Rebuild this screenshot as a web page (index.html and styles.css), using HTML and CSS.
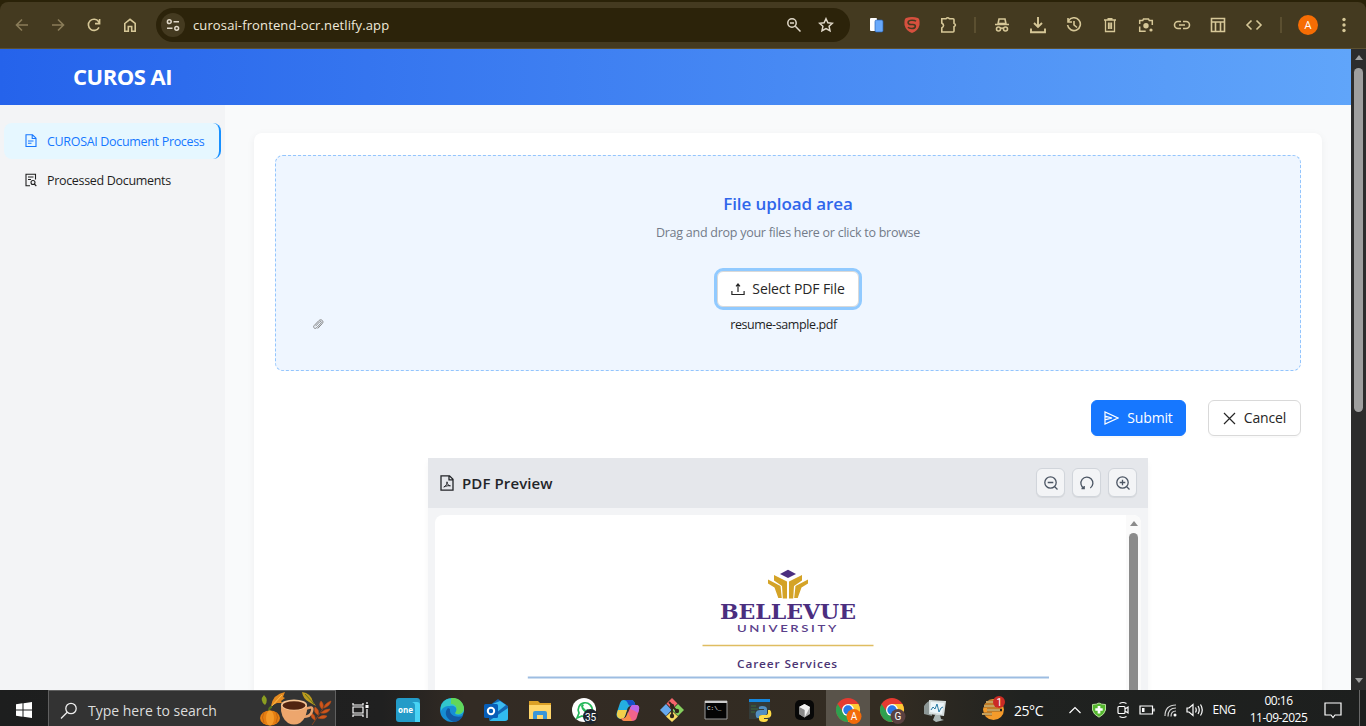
FILE: index.html
```html
<!DOCTYPE html>
<html lang="en">
<head>
<meta charset="utf-8">
<title>CUROS AI</title>
<link rel="stylesheet" href="styles.css">
</head>
<body>
<div class="screen">
  <div class="tabstrip"></div>
  <div class="toolbar">
    <span class="slot dim"><svg width="16" height="16" viewBox="0 0 16 16"><path d="M14 8H3M8 2.5 2.5 8 8 13.5"/></svg></span>
    <span class="slot dim"><svg width="16" height="16" viewBox="0 0 16 16"><path d="M2 8h11M8 2.5 13.500 8 8 13.500"/></svg></span>
    <span class="slot"><svg width="16" height="16" viewBox="0 0 16 16"><path d="M13 10.300A5.600 5.600 0 1 1 12.600 4.600L13.300 6M13.600 2v4.600H9"/></svg></span>
    <span class="slot"><svg width="16" height="16" viewBox="0 0 16 16"><path d="M2.800 6.500 8 2.300l5.200 4.200v7.700H9.700V9.500H6.300v4.700H2.800z"/></svg></span>
    <div class="address">
      <span class="site"><svg width="14" height="14" viewBox="0 0 14 14"><circle cx="3.300" cy="3.700" r="1.900"/><path d="M7.500 3.700H13M1 10.300h5.500"/><circle cx="10.700" cy="10.300" r="1.900"/></svg></span>
      <span class="url">curosai-frontend-ocr.netlify.app</span>
      <span class="tool"><svg width="16" height="16" viewBox="0 0 16 16"><circle cx="6" cy="6" r="4.200"/><path d="M4 6h4M9.300 9.300 14.500 14.500"/></svg></span>
      <span class="tool"><svg width="16" height="16" viewBox="0 0 16 16"><path d="m8 1.700 1.900 4.100 4.500.5-3.300 3 .9 4.400L8 11.500l-4 2.200.9-4.400-3.300-3 4.500-.5z"/></svg></span>
    </div>
    <span class="slot"><svg width="16" height="16" viewBox="0 0 16 16"><rect x="2" y="1" width="7" height="13" rx="1" fill="#fff" stroke="none"/><rect x="7" y="3" width="8" height="12" rx="1.500" fill="#68a9fb" stroke="#2861b5" stroke-width=".7"/></svg></span>
    <span class="slot"><svg width="18" height="18" viewBox="0 0 18 18"><path d="M3 2Q9 0 15 2Q17 3 16.500 9Q15 15 9 17Q3 15 1.500 9Q1 3 3 2z" fill="#d7503e" stroke="none"/><path d="M13 5.300Q12 4.300 9 4.300C4 4.300 4 8.500 8 8.500h2c3.500 0 3 4-1 4q-3 0-4-1.200" stroke="#443a20" stroke-width="1.600"/></svg></span>
    <span class="slot"><svg width="18" height="18" viewBox="0 0 18 18"><path d="M2.800 2.800H7Q8.700.8 10.400 2.800H14a1 1 0 0 1 1 1v3.600q2.800 1.600 0 3.200V15a1 1 0 0 1-1 1H2.800V12q3.500-2.500 0-5z"/></svg></span>
    <span class="divider"></span>
    <span class="slot"><svg width="16" height="16" viewBox="0 0 16 16"><path d="M4 7 5 2h6l1 5M1 7.500h14"/><path d="M4 6.500h8"/><circle cx="4.500" cy="12" r="2"/><circle cx="11.500" cy="12" r="2"/><path d="M6.500 11.500q1.500-1 3 0"/></svg></span>
    <span class="slot"><svg width="18" height="18" viewBox="0 0 18 18"><path d="M9 1v9.500M5 7l4 4 4-4M2 12.500v3.700h14v-3.700" stroke-width="1.900"/></svg></span>
    <span class="slot"><svg width="16" height="16" viewBox="0 0 16 16"><path d="M2.500 3.800A6.400 6.400 0 1 1 1.600 8M2 1v4h4M8 4v4l3 2.500"/></svg></span>
    <span class="slot"><svg width="16" height="16" viewBox="0 0 16 16"><path d="M2 3h12M5.500 1.700h5M3.500 3.500v11h9v-11M6.500 5.500v6.500M8 5.500v6.500M9.500 5.500v6.500" stroke-width="1.300"/></svg></span>
    <span class="slot"><svg width="16" height="16" viewBox="0 0 16 16"><path d="M1.700 7V3.600h3l.8-1.700h5l.8 1.700h3V8M1.700 9.500v4.800h6" stroke-width="1.500"/><circle cx="8" cy="8.700" r="2.700" fill="#d6c797" stroke="none"/><circle cx="13" cy="13" r="1.600" fill="#d6c797" stroke="none"/></svg></span>
    <span class="slot"><svg width="18" height="16" viewBox="0 0 18 16"><path d="M8 4.500H5a3.500 3.500 0 0 0 0 7h3M10 4.500h3a3.500 3.500 0 0 1 0 7h-3M6 8h6"/></svg></span>
    <span class="slot"><svg width="16" height="16" viewBox="0 0 16 16"><path d="M1.500 1.500h13v13h-13zM1 5h14M5.500 5v9M10.500 5v9"/></svg></span>
    <span class="slot"><svg width="18" height="16" viewBox="0 0 18 16"><path d="M6.500 3.500 2 8l4.500 4.500M11.500 3.500 16 8l-4.500 4.500"/></svg></span>
    <span class="divider"></span>
    <span class="slot"><span class="avatar">A</span></span>
    <span class="slot"><svg width="16" height="16" viewBox="0 0 16 16"><g fill="#d6c797" stroke="none"><circle cx="8" cy="2.500" r="1.700"/><circle cx="8" cy="8" r="1.700"/><circle cx="8" cy="13.500" r="1.700"/></g></svg></span>
  </div>

  <div class="viewport">
    <div class="page">
      <header class="header"><h1 class="brand">CUROS AI</h1></header>
      <div class="content">
        <nav class="sidebar">
          <a class="nav-item active"><svg width="14" height="14" viewBox="0 0 14 14"><path d="M2 .8h6.500L12 4.200v8.300H2zM8.200 1v3.500H12M4 7h5.500M4 9.300h3.500"/></svg><span>CUROSAI Document Process</span></a>
          <a class="nav-item"><svg width="14" height="14" viewBox="0 0 14 14"><path d="M6 12.700H2V1.300h9.500v5.200M4 4h5.500M4 6.500h3"/><circle cx="9" cy="9.500" r="2"/><path d="m10.300 11 2 2"/></svg><span>Processed Documents</span></a>
        </nav>
        <main class="main">
          <section class="card">
            <div class="dropzone">
              <h2 class="drop-title">File upload area</h2>
              <p class="drop-hint">Drag and drop your files here or click to browse</p>
              <button class="button select"><svg width="14" height="14" viewBox="0 0 14 14"><path d="M7 10V2M5 4.300 7 2l2 2.300M.9 9v3.500h12.200V9"/></svg><span>Select PDF File</span></button>
              <div class="file">
                <svg width="12" height="13" viewBox="0 0 12 13"><path d="m3.500 8.200 4.200-4.400c1-1 2.300.2 1.300 1.300L4.700 9.700c-1.800 1.800-4.200-.4-2.500-2.200l4.500-4.700c2.500-2.500 5.700.4 3.500 2.800L5.700 10.500"/></svg>
                <span class="file-name">resume-sample.pdf</span>
              </div>
            </div>
            <div class="actions">
              <button class="button submit"><svg width="15" height="14" viewBox="0 0 15 14"><path d="M1 1v4.200L8 7 1 8.800V13l13-6zM1 5.200V8.800"/></svg><span>Submit</span></button>
              <button class="button cancel"><svg width="13" height="13" viewBox="0 0 13 13"><path d="m1 1 11 11M12 1 1 12"/></svg><span>Cancel</span></button>
            </div>
            <section class="preview">
              <div class="preview-head">
                <svg width="14" height="16" viewBox="0 0 14 16"><path d="M1 .8h8.500L13 4.300v10.900H1zM9 1v3.800h4"/><path d="M3.800 12c2.400-1.200 3.500-3.500 3.200-5.200 0 2.500 1.600 4 3.400 4-2-.3-4.200 0-6.600 1.200" stroke-width="1"/></svg>
                <span class="preview-title">PDF Preview</span>
                <span class="zoom-button"><svg width="16" height="16" viewBox="0 0 16 16"><circle cx="7.500" cy="7.500" r="5.700"/><path d="M4.700 7.500h5.600M11.700 11.700l2.800 2.800"/></svg></span>
                <span class="zoom-button"><svg width="16" height="16" viewBox="0 0 16 16"><path d="M5 13.300A6 6 0 1 1 11.300 13M2.500 13.500H5.200V11"/></svg></span>
                <span class="zoom-button"><svg width="16" height="16" viewBox="0 0 16 16"><circle cx="7.500" cy="7.500" r="5.700"/><path d="M4.700 7.500h5.600M7.500 4.700v5.600M11.700 11.700l2.800 2.800"/></svg></span>
              </div>
              <div class="preview-body">
                <div class="paper">
                  <svg class="letterhead" width="522" height="118" viewBox="0 0 522 118">
                    <path d="M261 -.2 253 4l8 4 8-4z" fill="#4b2e7f"/>
                    <g fill="#d4a327">
                      <path d="M247 5 260 11.500V28.500H255.800L255 16 247 10.500zM275 5 262 11.500V28.500H266.200L267 16 275 10.500z"/>
                      <path d="M241 9.500 253.500 16 254.800 28H251.300L247.500 17.500 241 13.500zM281 9.500 268.500 16 267.200 28H270.700L274.500 17.500 281 13.500z"/>
                    </g>
                    <text x="193" y="49" textLength="136" lengthAdjust="spacingAndGlyphs" class="school">BELLEVUE</text>
                    <text x="210" y="62" textLength="102" lengthAdjust="spacingAndGlyphs" class="university">UNIVERSITY</text>
                    <path d="M175.500 75.500h171" stroke="#dfbd61" stroke-width="1.400"/>
                    <text x="210" y="98" textLength="101" lengthAdjust="spacingAndGlyphs" class="career">Career Services</text>
                    <path d="M.8 107.500H522" stroke="#9dbde2" stroke-width="2"/>
                  </svg>
                </div>
                <div class="paper-scroll"><span class="arrow-up"></span><span class="paper-thumb"></span></div>
              </div>
            </section>
          </section>
        </main>
      </div>
    </div>
    <div class="scrollbar"><span class="arrow-up"></span><span class="thumb"></span><span class="arrow-down"></span></div>
  </div>

  <footer class="taskbar">
    <span class="start"><svg width="16" height="16" viewBox="0 0 16 16" fill="#fff"><path d="M0 2.200 6.500 1.300v6.200H0zM7.500 1.200 16 0v7.500H7.500zM0 8.500h6.500v6.200L0 13.800zM7.500 8.500H16V16l-8.500-1.200z"/></svg></span>
    <div class="search">
      <svg width="18" height="18" viewBox="0 0 18 18" fill="none" stroke="#eee" stroke-width="1.300"><circle cx="11" cy="6.500" r="5.200"/><path d="M7.200 10.300 1 16.500"/></svg>
      <span>Type here to search</span>
      <svg class="autumn" width="74" height="35" viewBox="0 0 74 35">
        <path d="M6 14Q0 9 5 4q5 5 1 10v3" fill="#8b9e21"/>
        <path d="M12 15q2-12 14-14l-2 5 2 1-4 3 1 2-5 0z" fill="#e58a20"/><path d="m11 17 12-13" stroke="#ffc04c"/>
        <path d="M43 1q9 1 11 10l3 4-7-4q-6-3-7-10z" fill="#bd9b1e"/>
        <path d="m46 3 9 10" stroke="#62721c"/>
        <path d="M10 20q0-4 3-4" stroke="#57731a" stroke-width="2" fill="none"/>
        <ellipse cx="11" cy="27" rx="10" ry="7.500" fill="#e47e12"/><ellipse cx="11" cy="27" rx="4" ry="7.500" fill="#f59a28"/><path d="M5 21q-3 5 0 11M17 21q3 5 0 11" stroke="#bd5e0d" stroke-width=".8" fill="none"/>
        <path d="M53 34 67 13M56 29q-5-2-4-7 5 2 4 7M59 24q-5-3-3-8 5 3 3 8M63 18q-4-4-1-8 4 4 1 8M59 27q7 2 9-2-5-2-9 2M62 22q7 1 9-4-6 0-9 4M65 17q6-2 7-7-6 2-7 7" stroke="#bb4b16" stroke-width=".6" fill="#cf571c"/>
        <path d="M46 18q9-4 7 2-1 6-10 6" fill="none" stroke="#e8a16b" stroke-width="2.500"/>
        <path d="M22 14h26q1 12-7 18-6 3-12 0-8-6-7-18z" fill="#eda66d"/><ellipse cx="35" cy="14" rx="13" ry="5.500" fill="#f6c595"/><ellipse cx="35" cy="14.500" rx="11.500" ry="4.200" fill="#512310"/>
      </svg>
    </div>
    <span class="task-view"><svg width="17" height="16" viewBox="0 0 17 16" fill="none" stroke="#fff" stroke-width="1.200"><path d="M1 1v2h10V1M1 15v-2h10v2M1 5h10v6H1zM15 0v2M15 7v9"/><path d="M13.500 4.500h3" stroke-width="3"/></svg></span>
    <div class="apps">
      <span class="app"><svg width="24" height="24" viewBox="0 0 24 24"><rect width="24" height="24" rx="3" fill="#239bc8"/><path d="M16 4h5q3 0 3 3v17h-5V7q0-2-3-3z" fill="#48d3f5"/><text x="2" y="14.500" textLength="15" lengthAdjust="spacingAndGlyphs" class="one">one</text></svg></span>
      <span class="app"><svg width="24" height="24" viewBox="0 0 24 24"><circle cx="12" cy="12" r="12" fill="#168ed5"/><path d="M1 8C4-2 20-3 24 10c1 6-5 8-9 6 4-5 0-9-5-8-5 0-8 2-9 5z" fill="#32c6cc"/><path d="M11 0c8-1 13 5 13 11-1 5-6 6-9 4 4-5 0-9-4-9z" fill="#61d75b"/><path d="M8 10c-5 5-1 12 6 14 4 0 7-3 9-6-6 2-14 0-13-7z" fill="#125aa5"/></svg></span>
      <span class="app"><svg width="24" height="24" viewBox="0 0 24 24"><path d="m5 8 9-7 10 7v14H5z" fill="#1267b4"/><path d="M6 7 16 3l6 4-10 8z" fill="#3cbbf0"/><path d="M5 23 24 10v10q0 3-3 3z" fill="#31bbef"/><rect y="6" width="14" height="14" rx="1.500" fill="#075eb8"/><circle cx="7" cy="13" r="3.200" fill="none" stroke="#fff" stroke-width="2"/></svg></span>
      <span class="app"><svg width="24" height="24" viewBox="0 0 24 24"><path d="M1 3h9l2 2h11v16H1z" fill="#dba027"/><path d="M1 7h22v14H1z" fill="#ffd66b"/><path d="M5 21v-6q0-2 2-2h10q2 0 2 2v6h-4v-4H9v4z" fill="#3a96d8"/></svg></span>
      <span class="app wide"><svg width="26" height="26" viewBox="0 0 26 26"><circle cx="12" cy="12" r="12" fill="#fff"/><path d="m5 20 2-5a7 7 0 1 1 3 3z" fill="none" stroke="#26b85b" stroke-width="1.700"/><path d="M9 8q1 6 7 7l1-3-2-1-1 1-3-3 1-2-2-1z" fill="#26b85b"/><circle cx="18.500" cy="18.500" r="7.500" fill="#1d242d"/><text x="18.500" y="22.500" class="count">35</text></svg></span>
      <span class="app"><svg width="24" height="24" viewBox="0 0 24 24"><path d="M7 2h8q3 0 4 4l.5 2H15q-3 0-4 4l-2 6q-1 3-4 3-6-1-4-7L4 5q1-3 3-3z" fill="#24aee0"/><path d="M2 12 1 15q-1 5 4 6 3 0 4-3l2-6z" fill="#f2cf4a"/><path d="M7 2h8q3 0 4 4l.5 2H15q-2 0-3-2-1-4-5-4z" fill="#1750c9"/><path d="M17 7h3q4 0 3 5l-2 7q-1 4-5 4H9q-3 0-4-3 4 2 6-3l3-7q1-3 3-3z" fill="#f0638b"/><path d="M17 7h3q4 0 3 5l-1 3q-4-3-8-4 1-4 3-4z" fill="#bd66e8"/><path d="M9 23q-3 0-4-3 4 2 6-3l1-3 4 9z" fill="#f78b4b"/></svg></span>
      <span class="app"><svg width="24" height="24" viewBox="0 0 24 24"><path d="m12 0 5.500 5.500L12 11 6.500 5.500z" fill="#f4656b"/><path d="m6 6 5.500 6L6 18l-6-6z" fill="#66a9ee"/><path d="m18 6 6 6-6 6-6-6z" fill="#86cf5e"/><path d="m12 13 6 5.500-6 5.500-6-5.500z" fill="#f8db65"/><path d="m9 4 3 3v11M12 8l5 5" stroke="#30251c" stroke-width="1.800" fill="none"/><circle cx="12" cy="8" r="2.200" fill="#30251c"/><circle cx="17" cy="13" r="2.200" fill="#30251c"/><circle cx="12" cy="18" r="2.200" fill="#30251c"/></svg></span>
      <span class="app"><svg width="24" height="24" viewBox="0 0 24 24"><path d="M1 3h22v18H1z" fill="#050505" stroke="#9b9b9b"/><path d="M1 3h22v2H1z" fill="#ccc"/><text x="3" y="12" class="prompt">C:\_</text></svg></span>
      <span class="app"><svg width="24" height="24" viewBox="0 0 24 24"><path d="M1 2h21v19H1z" fill="#343c3a"/><path d="M1 1h21v3H1z" fill="#1688df"/><path d="M3 8h5M3 11h7M3 14h4" stroke="#3f6d38"/><path d="M14 8q5 0 5 3v4q0 2-3 2h-3q-2 0-2 3H9q-2-2-1-6 1-2 4-2h4v-1h-5q-1-3 3-3z" fill="#528fc1"/><path d="M20 12h2q2 2 1 6-1 2-4 2h-3v1h4q0 3-4 3-5 0-5-3v-2q0-2 3-2h3q3 0 3-2z" fill="#ffdb46"/></svg></span>
      <span class="app"><svg width="24" height="24" viewBox="0 0 24 24"><rect x="3" y="2" width="19" height="20" rx="5" fill="#080808"/><path d="m7 9 5.500-3L18 9v7l-5.500 3.500L7 16z" fill="#aaa"/><path d="m12.500 6 5.500 3-5.500 10.500V12L7 9z" fill="#f2f2f2"/><path d="m7 9 5.500 3v7.500L7 16z" fill="#8a8a8a"/></svg></span>
      <span class="app wide current"><svg width="26" height="26" viewBox="0 0 26 26"><circle cx="12" cy="12" r="12" fill="#e53a31"/><path d="M1.600 6A12 12 0 0 0 12 24l6-10H7z" fill="#2fa04f"/><path d="M12 6h10.400A12 12 0 0 1 12 24l5-9z" fill="#fcc934"/><circle cx="12" cy="12" r="6" fill="#fff"/><circle cx="12" cy="12" r="4.700" fill="#2878e8"/><circle cx="18" cy="18.500" r="7.500" fill="#f36b0a"/><text x="18" y="22" class="badge">A</text></svg></span>
      <span class="app wide"><svg width="26" height="26" viewBox="0 0 26 26"><circle cx="12" cy="12" r="12" fill="#e53a31"/><path d="M1.600 6A12 12 0 0 0 12 24l6-10H7z" fill="#2fa04f"/><path d="M12 6h10.400A12 12 0 0 1 12 24l5-9z" fill="#fcc934"/><circle cx="12" cy="12" r="6" fill="#fff"/><circle cx="12" cy="12" r="4.700" fill="#2878e8"/><circle cx="18" cy="18.500" r="7.500" fill="#5a4141"/><text x="18" y="22" class="badge">G</text></svg></span>
      <span class="app last"><svg width="24" height="24" viewBox="0 0 24 24"><path d="M1 8q3-5 8-6v16l-8-2z" fill="#8c9695"/><path d="m6 2 17 1-2 15-15-2z" fill="#d5dddd"/><path d="m8 4 13 1-2 11-12-2z" fill="#edf6fa"/><path d="m8 12 2-3 2 2 2-5 2 8 2-4 2-1" stroke="#287aa4" stroke-width="1" fill="none"/><path d="M12 17h5l1 4 3 1-8 2-3-2z" fill="#aeb9b8"/></svg></span>
    </div>
    <div class="weather"><svg width="25" height="26" viewBox="0 0 25 26"><circle cx="12.500" cy="13.500" r="10.500" fill="#f49b2b"/><path d="M3 6h12M1 10h15M6 14h15M1 18h10" stroke="#252321" stroke-width="2.500"/><path d="M5 6h10M3 10h11M6 14h13M1 18h10" stroke="#f7ca74" stroke-width="1.700"/><circle cx="18" cy="6" r="6" fill="#cb2b25"/><text x="18" y="9.500" class="badge">1</text></svg><span>25°C</span></div>
    <div class="tray">
      <span><svg width="14" height="14" viewBox="0 0 14 14"><path d="m1.500 10 5.500-5.500L12.500 10"/></svg></span>
      <span><svg width="16" height="16" viewBox="0 0 16 16"><path d="M1.500 2.500q4.500 0 6.500-1.500 2 1.500 6.500 1.500V8q-1 4.500-6.500 7.200Q2.500 12.500 1.500 8z" fill="#55b82f" stroke="#b6df9b" stroke-width="1"/><path d="M8 4v7.500M4.300 7.500h7.400" stroke="#fff" stroke-width="2.700"/></svg></span>
      <span><svg width="14" height="18" viewBox="0 0 14 18"><rect x="2" y="5.500" width="7" height="7" rx="1"/><path d="m9 8 3-2v6l-3-2M3.500 2.500q3.500-2 7 0M3.500 15.500q3.500 2 7 0"/></svg></span>
      <span><svg width="16" height="12" viewBox="0 0 16 12"><path d="M1 2h12.500v8H1zM15 4.500v3"/><path d="M3 4h2.500v4H3z" fill="#fff" stroke="none"/></svg></span>
      <span><svg width="14" height="16" viewBox="0 0 14 16"><path d="M1 14Q1 3 12 3M4 14.500Q4 6 12 6M7 14.500Q7 9 12 9" opacity=".8"/><circle cx="11" cy="13" r="1.500" fill="#fff" stroke="none"/></svg></span>
      <span><svg width="18" height="14" viewBox="0 0 18 14"><path d="M1 5h2l4-3.500v11L3 9H1zM9.500 4.500q1.500 2.500 0 5M12 3q2.500 4 0 8M14.500 1.500q3.500 5.500 0 11"/></svg></span>
    </div>
    <span class="language">ENG</span>
    <div class="clock"><span>00:16</span><span class="date">11-09-2025</span></div>
    <span class="notice"><svg width="20" height="18" viewBox="0 0 20 18" fill="none" stroke="#fff" stroke-width="1.200"><path d="M2 2h16v12h-6l-2 2.500L8 14H2z"/></svg></span>
    <span class="show-desktop"></span>
  </footer>
</div>
</body>
</html>
```
FILE: styles.css
```css
* { box-sizing: border-box; }
body { margin: 0; overflow: hidden; font-family: "Open Sans", sans-serif; }
h1, h2, p { margin: 0; }
svg { flex: none; display: block; }
button { font: inherit; padding: 0; }
.screen { width: 1366px; height: 726px; display: flex; flex-direction: column; background: #2a2208; white-space: nowrap; }
.tabstrip { height: 2px; background: #2a2208; flex: none; }
.toolbar { height: 47px; flex: none; display: flex; align-items: center; padding: 0 4px; background: #443a20; border-bottom: 1px solid #5c5031; border-radius: 8px 8px 0 0; }
.toolbar svg { fill: none; stroke: #d6c797; stroke-width: 1.600; }
.slot { width: 36px; height: 36px; display: flex; align-items: center; justify-content: center; flex: none; }
.toolbar .dim svg { stroke: #8a7c58; }
.address { width: 694px; height: 34px; flex: none; margin: 0 8px; padding: 0 8px 0 5px; border-radius: 17px; background: #2c230a; display: flex; align-items: center; }
.site { width: 24px; height: 24px; border-radius: 50%; background: #443a20; display: flex; align-items: center; justify-content: center; }
.address svg { stroke: #e0d8c8; stroke-width: 1.500; }
.url { flex: 1; padding-left: 8px; color: #f0eadb; font-size: 13px; letter-spacing: .12px; }
.tool { width: 32px; display: flex; justify-content: center; }
.divider { width: 18px; flex: none; display: flex; justify-content: center; }
.divider::after { content: ""; width: 2px; height: 16px; background: #5b4f30; }
.avatar { width: 20px; height: 20px; border-radius: 50%; background: #f66d04; color: #fff; font-size: 11px; line-height: 20px; text-align: center; }

.viewport { height: 641px; display: flex; flex: none; overflow: hidden; }
.page { width: 1351px; display: flex; flex-direction: column; background: #f9fafb; }
.header { height: 56px; flex: none; padding-left: 73px; display: flex; align-items: center; background: linear-gradient(90deg, #2563eb, #60a5fa); }
.brand { color: #fff; font-size: 22px; font-weight: 700; letter-spacing: -.5px; line-height: 30px; padding-bottom: 3px; }
.content { display: flex; height: 585px; overflow: hidden; }
.sidebar { width: 225px; flex: none; background: #f3f4f6; padding: 18px 4px; display: flex; flex-direction: column; gap: 3px; }
.nav-item { width: 217px; height: 36px; padding-left: 20px; display: flex; align-items: center; gap: 9px; color: #1f1f1f; font-size: 12.500px; letter-spacing: -.32px; border-radius: 8px; }
.nav-item svg { fill: none; stroke: currentColor; stroke-width: 1.100; }
.nav-item.active { color: #1677ff; background: #e6f7ff; border-right: 2px solid #1890ff; }
.main { width: 1126px; padding: 28px 29px 0; }
.card { width: 1068px; height: 700px; padding: 22px 21px; background: #fff; border-radius: 8px; box-shadow: 0 2px 8px #0000000d; display: flex; flex-direction: column; }
.dropzone { height: 216px; flex: none; border: 1px dashed #93c5fd; border-radius: 8px; background: #eff6ff; display: flex; flex-direction: column; align-items: center; padding-top: 35px; }
.drop-title { color: #2f66eb; font-size: 17px; font-weight: 600; line-height: 26px; letter-spacing: -.08px; }
.drop-hint { margin-top: 6px; color: #737b89; font-size: 12.500px; line-height: 20px; letter-spacing: -.26px; }
.button { height: 36px; display: flex; align-items: center; justify-content: center; gap: 7px; border: 1px solid #d9d9d9; border-radius: 6px; background: #fff; color: #262626; font-size: 14px; box-shadow: 0 2px 0 #00000005; }
.button svg { fill: none; stroke: currentColor; stroke-width: 1.200; }
.button span { padding-bottom: 1px; }
.select { width: 142px; margin-top: 28px; outline: 3px solid #91caff; outline-offset: 0; letter-spacing: -.1px; }
.file { align-self: stretch; margin-top: 6px; height: 22px; padding: 0 45px 0 36px; display: grid; grid-template-columns: 12px 1fr 12px; align-items: center; text-align: center; font-size: 12.500px; color: #1f1f1f; letter-spacing: -.4px; }
.file svg { fill: none; stroke: #777; stroke-width: .9; }
.actions { height: 36px; flex: none; margin-top: 29px; display: flex; justify-content: flex-end; gap: 22px; }
.submit { width: 95px; gap: 8px; background: #1677ff; border-color: #1677ff; color: #fff; letter-spacing: -.15px; }
.cancel { width: 93px; gap: 8px; letter-spacing: -.15px; }
.preview { width: 720px; height: 300px; margin-top: 22px; align-self: center; flex: none; background: #f3f4f6; box-shadow: 0 4px 6px #0000000a; }
.preview-head { height: 50px; background: #e5e7eb; padding: 0 11px 0 12px; display: flex; align-items: center; color: #232529; }
.preview-head svg { fill: none; stroke: currentColor; stroke-width: 1.300; }
.preview-title { flex: 1; margin-left: 8px; font-size: 15px; font-weight: 600; letter-spacing: .1px; }
.zoom-button { width: 29px; height: 29px; margin: 0 0 1px 7px; border: 1px solid #d1d5db; border-radius: 6px; background: #f3f4f6; color: #4b5563; display: flex; align-items: center; justify-content: center; box-shadow: 0 1px 1px #0001; }
.preview-body { margin: 7px 7px 0; height: 240px; display: flex; background: #fff; border-radius: 8px; overflow: hidden; }
.paper { width: 691px; padding: 55px 0 0 92px; }
.letterhead { overflow: visible; }
.school { font: 700 20px "DejaVu Serif", serif; fill: #4b2e7f; }
.university { font: 600 10px Lato, sans-serif; letter-spacing: 2px; fill: #5a408a; }
.career { font: 600 11px "Open Sans", sans-serif; letter-spacing: .8px; fill: #4b3474; }
.paper-scroll { width: 15px; background: #fafafa; display: flex; flex-direction: column; align-items: center; padding-top: 6px; }
.arrow-up { border: 4.500px solid transparent; border-top: 0; border-bottom: 5px solid #8b8b8b; }
.paper-thumb { width: 9px; height: 230px; margin-top: 7px; border-radius: 5px; background: #8b8b8b; }
.scrollbar { width: 15px; background: #2c2c2c; display: flex; flex-direction: column; align-items: center; padding: 6px 0 7px; }
.scrollbar .arrow-up { border-bottom-color: #9f9f9f; }
.thumb { width: 9px; height: 344px; margin-top: 8px; border-radius: 5px; background: #9f9f9f; }
.arrow-down { margin-top: auto; border: 4.500px solid transparent; border-bottom: 0; border-top: 5px solid #9f9f9f; }

.taskbar { height: 36px; flex: none; display: flex; color: #fff; background: linear-gradient(90deg, #1d1e1e 0, #202020 28%, #332b24 34%, #332c22 65%, #202220 75%, #1d1f1e); }
.taskbar > span { display: flex; align-items: center; justify-content: center; }
.start { width: 48px; padding-top: 4px; }
.search { width: 288px; border: 1px solid #606060; border-bottom: 0; background: #333; display: flex; align-items: center; padding: 4px 2px 0 11px; gap: 10px; font-size: 14px; color: #ddd; letter-spacing: 0; }
.search > span { flex: 1; }
.autumn { margin-top: -4px; fill: none; }
.task-view { width: 48px; padding-top: 4px; }
.apps { display: flex; width: 575px; padding-left: 2px; }
.app { width: 44px; height: 36px; flex: none; display: flex; justify-content: center; align-items: center; padding-top: 4px; }
.app.wide { padding: 5px 0 0 2px; }
.app.last { padding-right: 2px; }
.current { background: #59534a; }
.one { font: 700 9px "Open Sans", sans-serif; fill: #fff; }
.count { font: 10px Roboto, sans-serif; fill: #fff; text-anchor: middle; }
.badge { font: 10px Roboto, sans-serif; fill: #fff; text-anchor: middle; }
.prompt { font: 6px "Liberation Mono", monospace; fill: #fff; }
.weather { width: 104px; padding: 4px 0 0 22px; display: flex; align-items: center; gap: 8px; font-size: 14px; letter-spacing: -.45px; }
.weather svg { margin-top: -2px; }
.tray { width: 148px; padding-top: 4px; display: grid; grid-template-columns: repeat(6, 24px); }
.tray > span { display: flex; align-items: center; justify-content: center; }
.tray svg { fill: none; stroke: #fff; stroke-width: 1.200; }
.language { width: 26px; padding-top: 2px; font-size: 12px; letter-spacing: -.4px; }
.clock { width: 80px; padding-top: 2px; padding-left: 3px; display: flex; flex-direction: column; align-items: center; font-size: 12px; line-height: 17px; letter-spacing: -.5px; }
.notice { width: 31px; padding-top: 4px; }
.show-desktop { width: 12px; border-right: 1px solid #686868; }
```
